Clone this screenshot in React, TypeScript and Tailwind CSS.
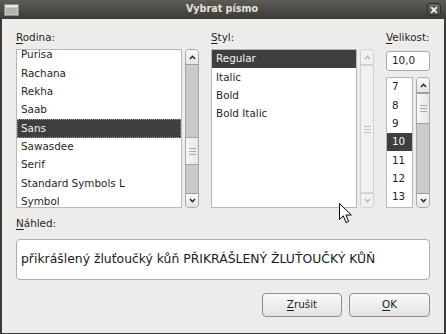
import React from "react";

const FONT = { fontFamily: '"DejaVu Sans", "Noto Sans", sans-serif' };

function Chevron({ up, disabled }: { up: boolean; disabled?: boolean }) {
  return (
    <svg width="7" height="5" viewBox="0 0 7 5">
      <path
        d={up ? "M1 4 L3.5 1.3 L6 4" : "M1 1 L3.5 3.7 L6 1"}
        fill="none"
        stroke={disabled ? "#b4b4b4" : "#222"}
        strokeWidth="1.4"
      />
    </svg>
  );
}

function Grip({ disabled }: { disabled?: boolean }) {
  const c = disabled ? "bg-[#c4c4c4]" : "bg-[#a8a8a8]";
  return (
    <div className="flex flex-col gap-[2px] items-center">
      <div className={`w-[7px] h-px ${c}`} />
      <div className={`w-[7px] h-px ${c}`} />
      <div className={`w-[7px] h-px ${c}`} />
    </div>
  );
}

function Scrollbar({
  height,
  thumbOffset,
  thumbHeight,
  disabled,
}: {
  height: number;
  thumbOffset: number;
  thumbHeight: number;
  disabled?: boolean;
}) {
  const btn = disabled
    ? "bg-[#f1f1f1] border-[#cfcfcf]"
    : "bg-gradient-to-b from-[#fbfbfb] to-[#e4e4e4] border-[#9c9c9c]";
  return (
    <div
      className={`w-[14px] flex flex-col rounded-[4px] border ${
        disabled ? "border-[#cfcfcf] bg-[#e9e9e9]" : "border-[#a9a9a9] bg-[#cbcbcb]"
      }`}
      style={{ height }}
    >
      <div className={`h-[15px] shrink-0 flex items-center justify-center rounded-t-[3px] border-b ${btn}`}>
        <Chevron up disabled={disabled} />
      </div>
      <div className="flex-1 flex flex-col">
        <div style={{ height: thumbOffset }} className="shrink-0" />
        <div
          className={`shrink-0 flex items-center justify-center border-y ${
            disabled
              ? "bg-[#f1f1f1] border-[#d6d6d6]"
              : "bg-gradient-to-r from-[#f7f7f7] to-[#e6e6e6] border-[#a3a3a3]"
          }`}
          style={{ height: thumbHeight }}
        >
          <Grip disabled={disabled} />
        </div>
      </div>
      <div className={`h-[14px] shrink-0 flex items-center justify-center rounded-b-[3px] border-t ${btn}`}>
        <Chevron up={false} disabled={disabled} />
      </div>
    </div>
  );
}

function Row({
  text,
  selected,
  focus,
  pad = "pl-[4px]",
}: {
  text: string;
  selected?: boolean;
  focus?: boolean;
  pad?: string;
}) {
  return (
    <div
      className={`h-[18.33px] shrink-0 flex items-center ${pad} ${
        selected ? "bg-[#3e3e3e] text-[#f4f4f4]" : "text-[#1f1f1f]"
      } ${focus ? "outline outline-1 outline-dotted outline-[#9a9a9a] -outline-offset-1" : ""}`}
    >
      {text}
    </div>
  );
}

function Label({ first, rest }: { first: string; rest: string }) {
  return (
    <div className="h-[14px] leading-[14px] text-[#1f1f1f] mb-[5px] whitespace-nowrap">
      <span className="underline underline-offset-[2px]">{first}</span>
      {rest}
    </div>
  );
}

export default function App() {
  const families = [
    "Purisa",
    "Rachana",
    "Rekha",
    "Saab",
    "Sans",
    "Sawasdee",
    "Serif",
    "Standard Symbols L",
    "Symbol",
  ];
  const styles = ["Regular", "Italic", "Bold", "Bold Italic"];
  const sizes = ["7", "8", "9", "10", "11", "12", "13"];

  return (
    <div
      className="w-[446px] h-[334px] relative flex flex-col bg-[#3b3a36] overflow-hidden text-[10.4px]"
      style={FONT}
    >
      {/* Title bar */}
      <div className="h-[19px] shrink-0 flex items-center justify-between px-[4px] bg-gradient-to-b from-[#5d5c57] to-[#3c3b37]">
        <svg width="15" height="12" viewBox="0 0 15 12">
          <rect x="0.5" y="0.5" width="14" height="11" fill="#c9c9c5" stroke="#8a8a86" />
          <rect x="1" y="1" width="13" height="2" fill="#e9e9e6" />
          <line x1="2" y1="5" x2="13" y2="5" stroke="#9c9c98" />
          <line x1="2" y1="7" x2="13" y2="7" stroke="#9c9c98" />
          <line x1="2" y1="9" x2="13" y2="9" stroke="#9c9c98" />
        </svg>
        <div className="font-bold text-[9.6px] text-[#e6e2da] -ml-[2px]">Vybrat písmo</div>
        <div className="w-[14px] h-[13px] rounded-[3px] bg-gradient-to-b from-[#6a6964] to-[#4a4944] border border-[#2e2d2a] flex items-center justify-center mr-[1px]">
          <svg width="8" height="8" viewBox="0 0 8 8">
            <path d="M1.2 1.2 L6.8 6.8 M6.8 1.2 L1.2 6.8" stroke="#f2f2f2" strokeWidth="1.8" />
          </svg>
        </div>
      </div>

      {/* Body */}
      <div className="flex-1 mx-[2px] mb-[1px] bg-[#edeceb] flex flex-col px-[14px] pt-[11px]">
        <div className="flex gap-[12px]">
          {/* Family */}
          <div className="flex flex-col">
            <Label first="R" rest="odina:" />
            <div className="flex gap-[3px]">
              <div className="w-[166px] h-[159px] bg-white border border-[#b9b9b9] overflow-hidden flex flex-col">
                <div className="-mt-[4px] flex flex-col">
                  {families.map((f) => (
                    <Row key={f} text={f} selected={f === "Sans"} focus={f === "Sans"} />
                  ))}
                </div>
              </div>
              <Scrollbar height={159} thumbOffset={72} thumbHeight={28} />
            </div>
          </div>

          {/* Style */}
          <div className="flex flex-col">
            <Label first="S" rest="tyl:" />
            <div className="flex gap-[3px]">
              <div className="w-[146px] h-[159px] bg-white border border-[#b9b9b9] overflow-hidden flex flex-col">
                {styles.map((s) => (
                  <Row key={s} text={s} selected={s === "Regular"} />
                ))}
              </div>
              <Scrollbar height={159} thumbOffset={0} thumbHeight={128} disabled />
            </div>
          </div>

          {/* Size */}
          <div className="flex flex-col w-[44px]">
            <Label first="V" rest="elikost:" />
            <div className="mt-[2px] h-[20px] rounded-[3px] bg-white border border-[#a9a9a9] flex items-center pl-[5px] text-[#1f1f1f]">
              10,0
            </div>
            <div className="mt-[6px] flex gap-[3px]">
              <div className="w-[27px] h-[131px] bg-white border border-[#b9b9b9] overflow-hidden flex flex-col">
                {sizes.map((s) => (
                  <Row key={s} text={s} selected={s === "10"} pad="pl-[5px]" />
                ))}
              </div>
              <Scrollbar height={131} thumbOffset={0} thumbHeight={31} />
            </div>
          </div>
        </div>

        {/* Preview */}
        <div className="mt-[8px]">
          <Label first="N" rest="áhled:" />
        </div>
        <div className="mt-[4px] h-[41px] rounded-[4px] bg-white border border-[#adadad] flex items-center pl-[4px] text-[12.4px] text-[#1a1a1a] whitespace-nowrap">
          přikrášlený žluťoučký kůň PŘIKRÁŠLENÝ ŽLUŤOUČKÝ KŮŇ
        </div>

        {/* Buttons */}
        <div className="mt-[13px] flex justify-end gap-[7px]">
          <div className="w-[80px] h-[24px] rounded-[4px] border border-[#8f8f8f] bg-gradient-to-b from-[#fafafa] to-[#e2e2e2] flex items-center justify-center text-[#1f1f1f]">
            <span>
              <span className="underline underline-offset-[2px]">Z</span>rušit
            </span>
          </div>
          <div className="w-[81px] h-[24px] rounded-[4px] border border-[#8f8f8f] bg-gradient-to-b from-[#fafafa] to-[#e2e2e2] flex items-center justify-center text-[#1f1f1f]">
            <span>
              <span className="underline underline-offset-[2px]">O</span>K
            </span>
          </div>
        </div>
      </div>

      {/* Mouse cursor */}
      <svg
        className="absolute left-[339px] top-[203px]"
        width="14"
        height="21"
        viewBox="0 0 14 21"
      >
        <path
          d="M0.5 0.5 L0.5 16.5 L4.3 12.8 L7 19.5 L9.6 18.4 L7 12 L12.3 12 Z"
          fill="#ffffff"
          stroke="#000000"
          strokeWidth="1"
          strokeLinejoin="round"
        />
      </svg>
    </div>
  );
}
